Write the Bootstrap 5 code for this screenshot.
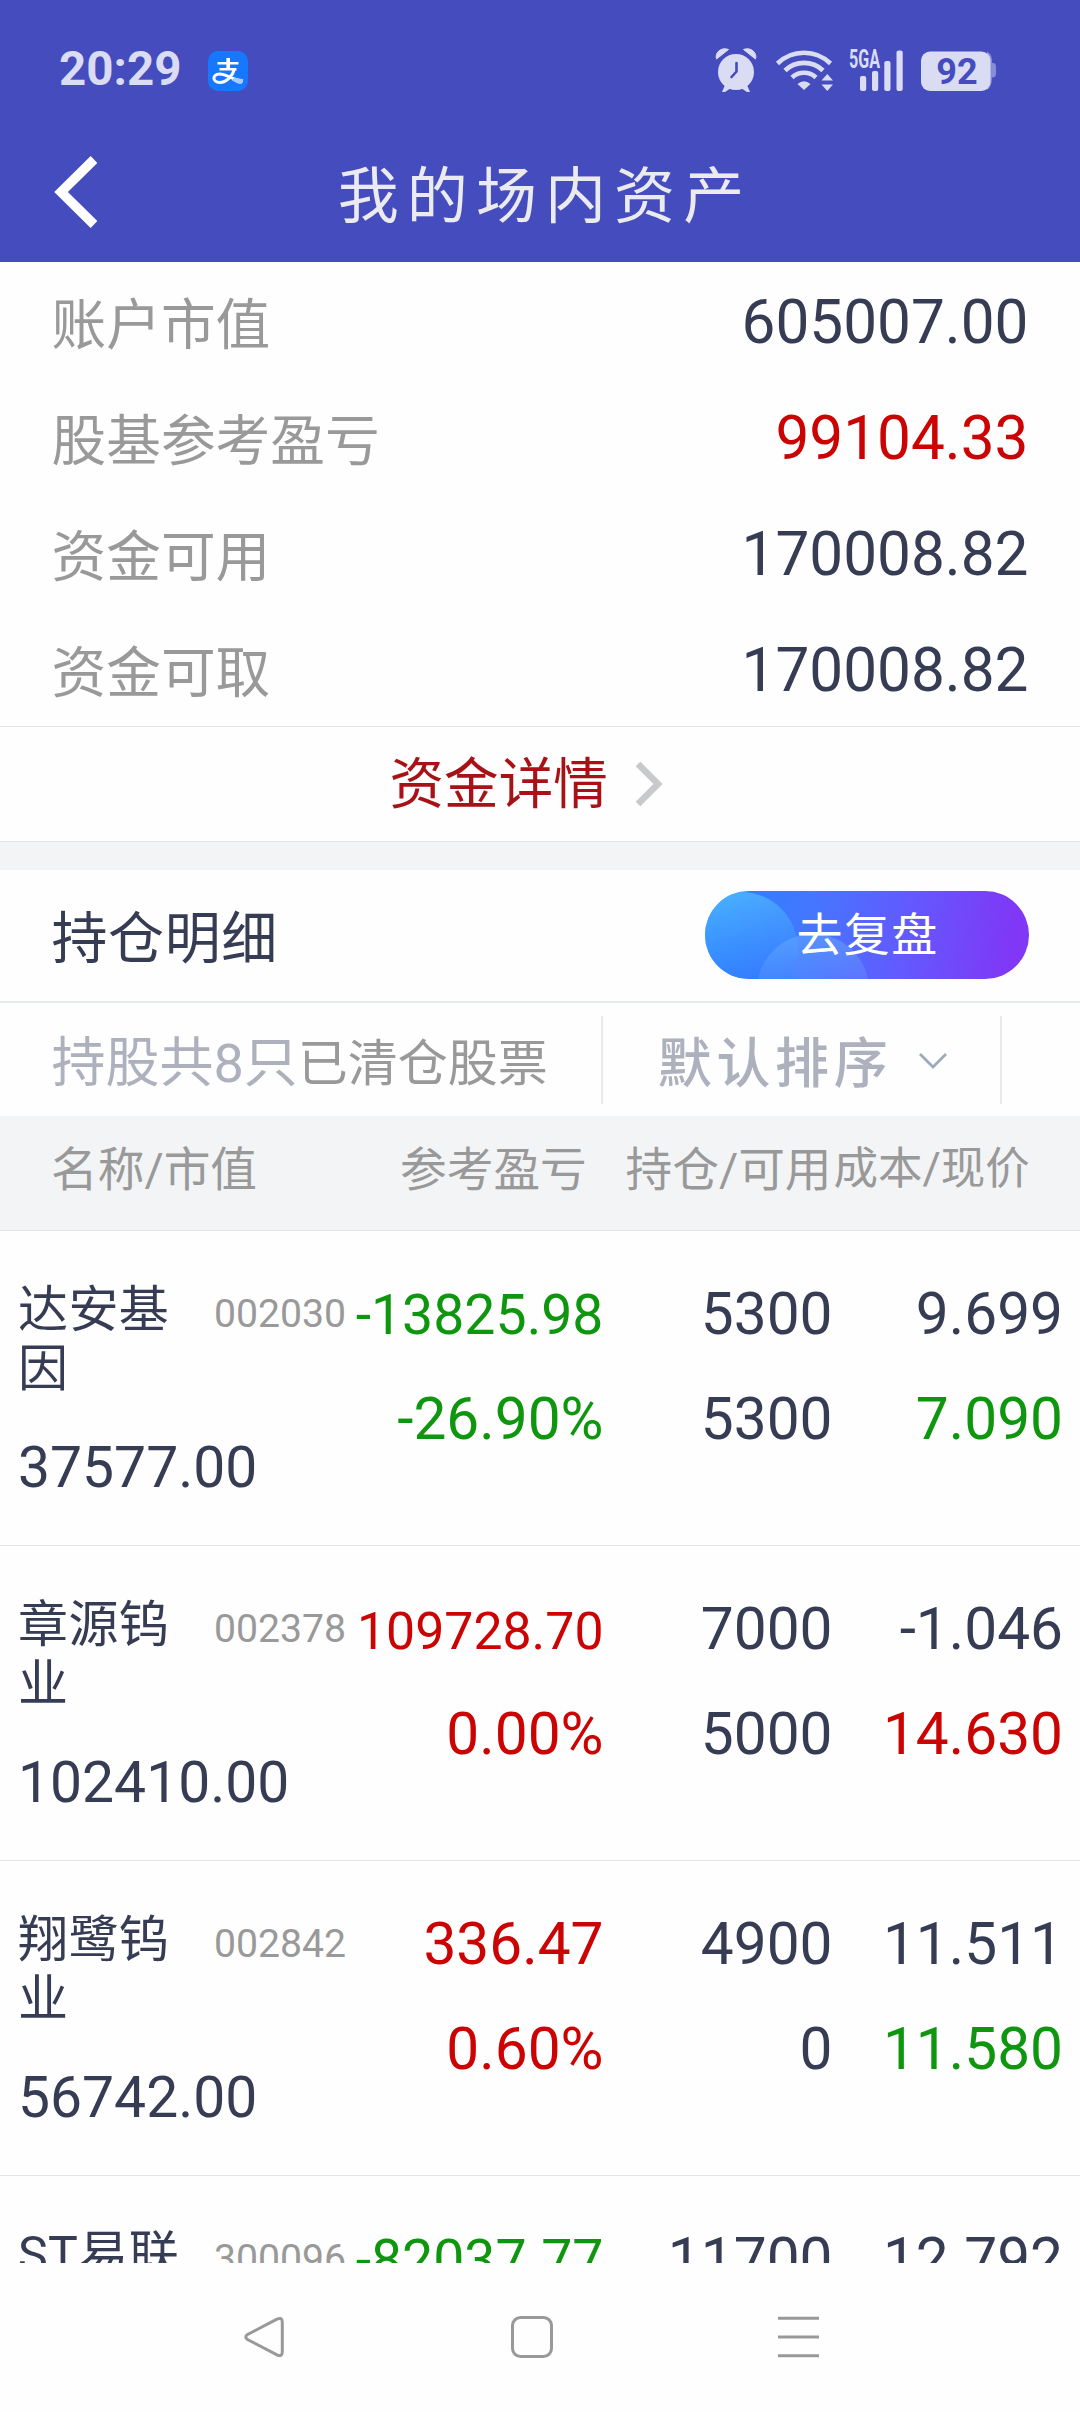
<!DOCTYPE html>
<html lang="zh-CN">
<head>
<meta charset="utf-8">
<meta name="viewport" content="width=device-width, initial-scale=1">
<title>我的场内资产</title>
<link href="https://cdn.jsdelivr.net/npm/bootstrap@5.3.0/dist/css/bootstrap.min.css" rel="stylesheet">
<style>
  :root { --ink:#363c54; --muted:#999; --soft:#adb0bd; --hair:#e3e4e5; --pale:#f3f4f6; --status:#dadcf4; }
  body { font-family: Roboto, "Noto Sans CJK SC", sans-serif; color: var(--ink); background:#fefefe; }
  svg { display:block; flex:none; }
  .screen { width:1080px; height:2412px; overflow:hidden; }
  .app-head { height:262px; background:#444cbe; }
  .status-bar { height:139px; padding:0 84px 0 59px; color:var(--status); }
  .status-icons { overflow:visible; }
  .clock { width:149px; font-size:47.5px; font-weight:700; line-height:139px; }
  .pay-logo { margin-top:3px; }
  .title-bar { height:123px; padding-bottom:17px; }
  .title-bar .side { width:160px; }
  .page-title { font-size:61px; letter-spacing:8.1px; line-height:90px; padding:9px 0 0 10px; color:#ebebef; font-weight:400; }
  .sum-row { height:116px; padding:0 51.5px; }
  .sum-label { font-size:54.7px; line-height:105px; padding-top:11px; color:var(--muted); }
  .sum-value { font-size:60.3px; line-height:111px; padding-top:5px; }
  .up { color:#cb0303; } .down { color:#0f960f; }
  .detail { height:116px; border-top:1px solid var(--hair); border-bottom:1px solid var(--hair); color:#a81217; font-size:54.6px; line-height:114px; padding-left:389.5px; gap:27.5px; }
  .strip { height:28px; background:var(--pale); }
  .hold-head { height:133px; padding:0 51px 0 51.5px; border-bottom:2px solid #e6ecec; }
  .hold-title { font-size:56px; letter-spacing:.6px; line-height:121px; padding-top:8px; }
  .review { width:324px; height:88px; overflow:hidden; margin-bottom:1px; background:linear-gradient(97deg,#2484ff 0%,#4576ff 33%,#615bff 60%,#8037f6 94%); }
  .review span { font-size:46px; letter-spacing:1.3px; line-height:86px; color:#fff; padding-left:1px; }
  .filter { height:113px; padding-left:51.5px; }
  .f-count { font-size:54px; line-height:100px; padding-top:9px; color:var(--soft); }
  .f-clear { font-size:50px; line-height:100px; padding-top:9px; color:var(--muted); width:303px; }
  .f-sort { width:397px; height:88px; font-size:54px; letter-spacing:4.6px; font-weight:500; color:var(--soft); padding-left:55px; gap:26px; }
  .f-sort span { line-height:78px; padding-top:10px; }
  .f-sort svg { margin-top:2px; }
  .v-line { width:2px; height:88px; background:#e5eaee; }
  .t-head { height:115px; background:var(--pale); border-bottom:1px solid var(--hair); color:var(--muted); font-size:46.7px; line-height:109px; padding-left:51px; }
  .t-name { width:349px; } .t-pl { width:225.500px; } .t-qty { width:208px; } .t-px { font-size:44.5px; line-height:107px; }
  .holding { height:315px; border-bottom:1px solid var(--hair); }
  .h-name { width:349px; padding:50px 0 0 18px; }
  .stock { width:196px; padding-right:18px; font-size:50px; letter-spacing:.4px; line-height:59px; word-break:break-all; }
  .code { font-size:39.2px; line-height:59px; padding-top:4px; color:var(--muted); }
  .worth { font-size:57px; line-height:60px; margin-top:39px; }
  .num { padding-top:31px; font-size:58.6px; line-height:105px; white-space:nowrap; }
  .num span { line-height:1; }
  .w-pl { width:254.500px; } .w-qty { width:229px; } .w-px { width:230.500px; }
  .s55 { font-size:55.4px; } .s52 { font-size:51.8px; }
  .list { height:1032px; }
  .sys-nav { height:149px; padding:0 260px 2px 243px; }
</style>
</head>
<body>
<div class="screen d-flex flex-column">
  <header class="app-head flex-shrink-0">
    <div class="status-bar d-flex align-items-center justify-content-between">
      <div class="d-flex align-items-center">
        <span class="clock">20:29</span>
        <svg class="pay-logo" width="40" height="40" viewBox="0 0 40 40">
          <rect width="40" height="40" rx="10" fill="#1677ff"/>
          <g fill="none" stroke="#fff" stroke-width="2.600">
            <path d="M9.500 12.300H30.500M11.500 18.300H28.500"/>
            <path d="M20.200 7V18" stroke-width="3.600"/>
            <path d="M26.500 17.500C24.500 26 18 31.500 12 31.500C3.800 31.500 4.200 23 11.500 23C18 23 25 28.500 34.500 30.500" stroke-width="3"/>
          </g>
          <path d="M26 26.500L35.300 28.300Q35 33 32.500 33C30 33 27.500 31.500 24 29.600Z" fill="#a9ccff"/>
        </svg>
      </div>
      <svg class="status-icons" width="281" height="46" viewBox="715 49 281 46" fill="#dadcf4">
        <circle cx="736" cy="74" r="18"/>
        <path d="M716.500 61C714.500 55 721 48.500 728.500 51.500ZM755.500 61C757.500 55 751 48.500 743.500 51.500Z" stroke="#dadcf4" stroke-width="1" stroke-linejoin="round"/>
        <path d="M725 87L722 94H725L731 90ZM747 87L750 94H747L741 90Z"/>
        <path d="M736.500 65V73.500L731.500 79" fill="none" stroke="#444cbe" stroke-width="2.600" stroke-linecap="round"/>
        <g fill="none" stroke="#dadcf4" stroke-width="4.600">
          <path d="M777.500 65.500A38 38 0 0 1 830.500 65.500"/>
          <path d="M785 72.500A27.500 27.500 0 0 1 823 72.500"/>
          <path d="M792 79.500A17.500 17.500 0 0 1 816 79.500"/>
        </g>
        <path d="M797.500 86Q804 80.500 810.500 86L804 92Z"/>
        <path d="M821.500 82.500L827.300 76L833 82.500ZM821.500 86.500H833L827.300 93Z"/>
        <text x="849" y="70" font-family="Roboto, sans-serif" font-weight="700" font-size="26" textLength="31" lengthAdjust="spacingAndGlyphs">5GA</text>
        <rect x="860" y="78" width="6.200" height="15" rx="2"/>
        <rect x="872" y="73" width="6.200" height="20" rx="2"/>
        <rect x="884.300" y="63" width="6.200" height="30" rx="2"/>
        <rect x="896.500" y="52.500" width="6.200" height="40.500" rx="2"/>
        <path d="M987 53.500Q993 57 992 65H993Q996 65 996 69V76Q996 79.500 992 79.500Q992 89 987 92Z" fill="#888dd8"/>
        <rect x="921" y="53.500" width="69.500" height="39.500" rx="9"/>
        <text x="957" y="86" font-family="Roboto, sans-serif" font-weight="700" font-size="36" text-anchor="middle" fill="#444cbe">92</text>
      </svg>
    </div>
    <div class="title-bar d-flex align-items-center justify-content-between">
      <div class="side">
        <svg width="100" height="84" viewBox="0 155 100 84"><path d="M94 164.500L61 197L94 229.500" fill="none" stroke="#fff" stroke-width="9.500"/></svg>
      </div>
      <h1 class="page-title m-0">我的场内资产</h1>
      <div class="side"></div>
    </div>
  </header>

  <section class="flex-shrink-0">
    <div class="sum-row d-flex justify-content-between"><span class="sum-label">账户市值</span><span class="sum-value">605007.00</span></div>
    <div class="sum-row d-flex justify-content-between"><span class="sum-label">股基参考盈亏</span><span class="sum-value up">99104.33</span></div>
    <div class="sum-row d-flex justify-content-between"><span class="sum-label">资金可用</span><span class="sum-value">170008.82</span></div>
    <div class="sum-row d-flex justify-content-between"><span class="sum-label">资金可取</span><span class="sum-value">170008.82</span></div>
    <div class="detail d-flex align-items-center">
      <span>资金详情</span>
      <svg width="28" height="46" viewBox="0 0 28 46"><path d="M3 3L23 23L3 43" fill="none" stroke="#c8c9cc" stroke-width="6.500"/></svg>
    </div>
  </section>
  <div class="strip flex-shrink-0"></div>

  <section class="flex-shrink-0">
    <div class="hold-head d-flex align-items-center justify-content-between">
      <h2 class="hold-title m-0 fw-normal">持仓明细</h2>
      <button class="review btn border-0 rounded-pill p-0 position-relative">
        <svg class="position-absolute top-0 start-0" width="324" height="88" viewBox="0 0 324 88">
          <defs>
            <linearGradient id="bubbleA" x1="0" y1="0" x2=".25" y2="1"><stop offset="0" stop-color="#56c4ff" stop-opacity=".8"/><stop offset="1" stop-color="#2f72ff" stop-opacity=".6"/></linearGradient>
            <linearGradient id="bubbleB" x1="0" y1="0" x2="0" y2="1"><stop offset="0" stop-color="#69b0ff" stop-opacity=".5"/><stop offset=".6" stop-color="#68a0ff" stop-opacity=".12"/></linearGradient>
          </defs>
          <circle cx="36" cy="58" r="57" fill="url(#bubbleA)"/>
          <circle cx="108" cy="99" r="56" fill="url(#bubbleB)"/>
        </svg>
        <span class="position-relative">去复盘</span>
      </button>
    </div>
    <div class="filter d-flex align-items-center">
      <span class="f-count">持股共8只</span><span class="f-clear">已清仓股票</span>
      <div class="v-line"></div>
      <div class="f-sort d-flex align-items-center">
        <span>默认排序</span>
        <svg width="30" height="18" viewBox="0 0 30 18"><path d="M2 2L15 15L28 2" fill="none" stroke="#9caabc" stroke-width="2.800"/></svg>
      </div>
      <div class="v-line"></div>
    </div>
    <div class="t-head d-flex">
      <span class="t-name">名称/市值</span><span class="t-pl">参考盈亏</span><span class="t-qty">持仓/可用</span><span class="t-px">成本/现价</span>
    </div>
  </section>

  <main class="list flex-shrink-0 overflow-hidden">
    <div class="holding d-flex">
      <div class="h-name"><div class="d-flex"><div class="stock">达安基因</div><div class="code">002030</div></div><div class="worth">37577.00</div></div>
      <div class="num w-pl text-end down"><div><span class="s55">-13825.98</span></div><div>-26.90%</div></div>
      <div class="num w-qty text-end"><div>5300</div><div>5300</div></div>
      <div class="num w-px text-end"><div>9.699</div><div class="down">7.090</div></div>
    </div>
    <div class="holding d-flex">
      <div class="h-name"><div class="d-flex"><div class="stock">章源钨业</div><div class="code">002378</div></div><div class="worth">102410.00</div></div>
      <div class="num w-pl text-end up"><div><span class="s52">109728.70</span></div><div>0.00%</div></div>
      <div class="num w-qty text-end"><div>7000</div><div>5000</div></div>
      <div class="num w-px text-end"><div>-1.046</div><div class="up">14.630</div></div>
    </div>
    <div class="holding d-flex">
      <div class="h-name"><div class="d-flex"><div class="stock">翔鹭钨业</div><div class="code">002842</div></div><div class="worth">56742.00</div></div>
      <div class="num w-pl text-end up"><div>336.47</div><div>0.60%</div></div>
      <div class="num w-qty text-end"><div>4900</div><div>0</div></div>
      <div class="num w-px text-end"><div>11.511</div><div class="down">11.580</div></div>
    </div>
    <div class="holding d-flex">
      <div class="h-name"><div class="d-flex"><div class="stock text-nowrap">ST易联</div><div class="code">300096</div></div></div>
      <div class="num w-pl text-end down"><div><span class="s55">-82037.77</span></div></div>
      <div class="num w-qty text-end"><div>11700</div></div>
      <div class="num w-px text-end"><div>12.792</div></div>
    </div>
  </main>

  <nav class="sys-nav flex-shrink-0 d-flex align-items-center justify-content-between">
    <svg width="42" height="42" viewBox="0 0 42 42"><path d="M34 3.200Q39.200 0.800 39.300 6V36Q39.200 41.200 34 38.800L4.500 23.500Q1 21 4.500 18.500Z" fill="none" stroke="#999" stroke-width="3" stroke-linejoin="round"/></svg>
    <svg width="42" height="42" viewBox="0 0 42 42"><rect x="1.500" y="1.500" width="39" height="39" rx="8" fill="none" stroke="#999" stroke-width="3"/></svg>
    <svg width="42" height="42" viewBox="0 0 42 42"><path d="M0 2.200H41M0 21H41M0 39.800H41" stroke="#999" stroke-width="3"/></svg>
  </nav>
</div>
<script src="https://cdn.jsdelivr.net/npm/bootstrap@5.3.0/dist/js/bootstrap.bundle.min.js"></script>
</body>
</html>
